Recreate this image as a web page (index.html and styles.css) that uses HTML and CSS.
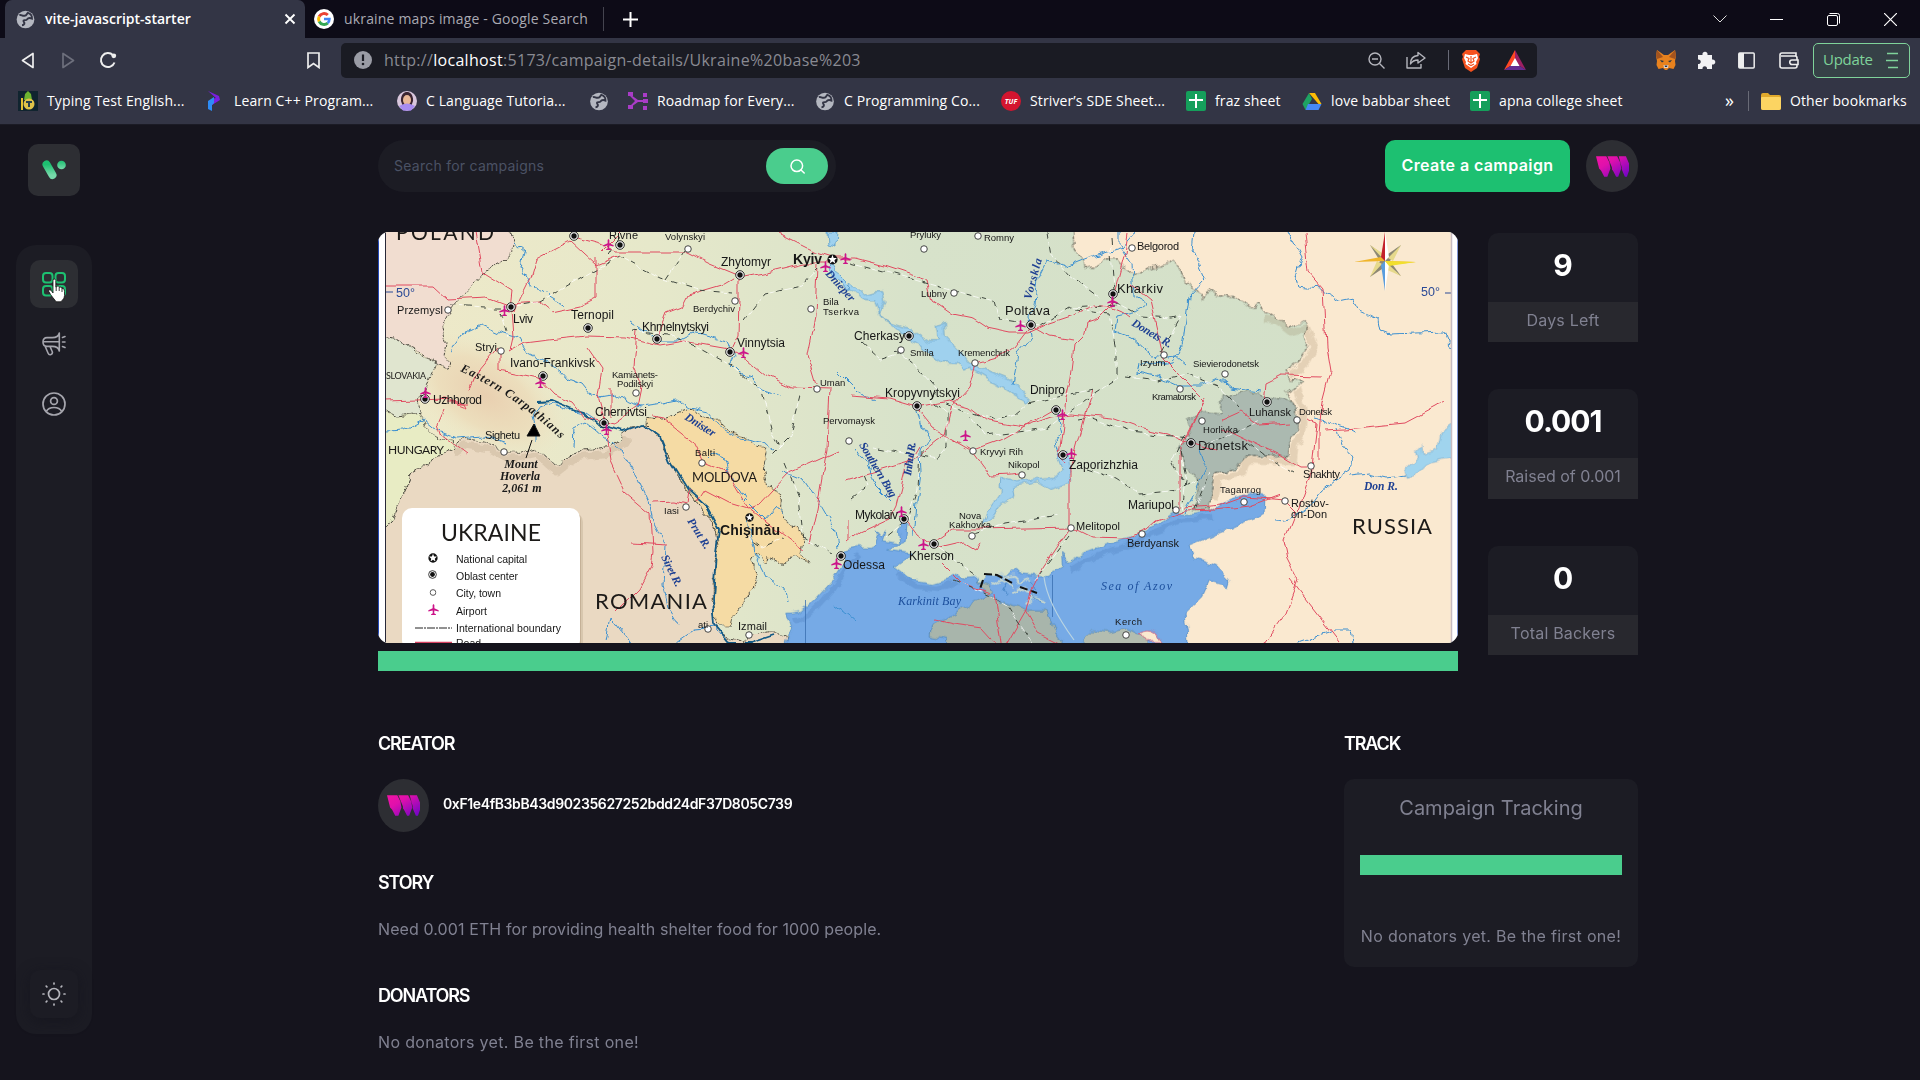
FILE: index.html
```html
<!DOCTYPE html>
<html lang="en">
<head>
<meta charset="utf-8">
<title>vite-javascript-starter</title>
<link rel="stylesheet" href="styles.css">
</head>
<body>
<svg class="defs" width="0" height="0" aria-hidden="true">
  <defs>
    <linearGradient id="tw" x1="0" y1="0" x2="1" y2="1"><stop offset="0" stop-color="#f213a4"/><stop offset=".35" stop-color="#e010ac"/><stop offset="1" stop-color="#6a04c8"/></linearGradient>
    <linearGradient id="lg" x1="0" y1="0" x2="0" y2="1"><stop offset="0" stop-color="#1dc071"/><stop offset="1" stop-color="#77d9aa"/></linearGradient>
    <linearGradient id="land" x1="0" y1="0" x2="1" y2="0"><stop offset="0" stop-color="#efe9c8"/><stop offset=".25" stop-color="#e6e8ca"/><stop offset=".5" stop-color="#d7e2ca"/><stop offset="1" stop-color="#d2dfc8"/></linearGradient>
    <radialGradient id="hills"><stop offset="0" stop-color="#e9cfb0"/><stop offset=".6" stop-color="#ecdbb9" stop-opacity=".8"/><stop offset="1" stop-color="#efe5c5" stop-opacity="0"/></radialGradient>
    <filter id="soft" x="-10%" y="-10%" width="120%" height="120%"><feDropShadow dx="8" dy="10" stdDeviation="10" flood-color="#54452c" flood-opacity=".45"/></filter>
    <filter id="rough" filterUnits="userSpaceOnUse" x="370" y="220" width="1100" height="440" color-interpolation-filters="sRGB"><feTurbulence type="fractalNoise" baseFrequency=".09" numOctaves="2" seed="4"/><feDisplacementMap in="SourceGraphic" scale="9" xChannelSelector="R" yChannelSelector="G"/></filter>
    <filter id="gentle" filterUnits="userSpaceOnUse" x="370" y="220" width="1100" height="440" color-interpolation-filters="sRGB"><feTurbulence type="fractalNoise" baseFrequency=".05" numOctaves="2" seed="9"/><feDisplacementMap in="SourceGraphic" scale="8" xChannelSelector="R" yChannelSelector="G"/></filter>
    <symbol id="globe" viewBox="0 0 20 20"><circle cx="10" cy="10" r="9.3" fill="#b4b7c0"/><path d="M3.500 5.500c2-1 3 1 5.500.5C11.500 6 11 4 12.500 3c3 1 4.500 3.500 4.300 6-2-1-4.300-.5-5.300 1s-2.500 0-3.500 1 1.500 2 .8 3.500-2 1.500-2.500 1.500" fill="none" stroke="#333545" stroke-width="2"/></symbol>
    <symbol id="sheet" viewBox="0 0 20 20"><rect width="20" height="20" rx="2" fill="#159f5b"/><path d="M9 3h2v5h6v2h-6v7H9v-7H3V8h6z" fill="#fff"/></symbol>
    <symbol id="third" viewBox="0 0 32 20"><path d="M0 0h10l3 6 1 6-3 8H8l-3-6-2-2zM11 0h9.500l3 6 1 6-3 8h-2l-3-6-1-1 0-2zM22 0h7l3 7v7l-2 6h-2l-3-7 0-2z" fill="url(#tw)"/></symbol>
    <symbol id="obl" viewBox="0 0 28 28"><circle cx="14" cy="14" r="12" fill="#fff" stroke="#111" stroke-width="2.500"/><circle cx="14" cy="14" r="7.500" fill="#111"/></symbol>
    <symbol id="cap" viewBox="0 0 28 28"><circle cx="14" cy="14" r="13" fill="#111"/><path d="M14 2l3 8h8l-6 6 2 8-7-5-7 5 2-8-6-6h8z" fill="#fff"/></symbol>
    <symbol id="town" viewBox="0 0 22 22"><circle cx="11" cy="11" r="9" fill="#fff" stroke="#333" stroke-width="2.500"/></symbol>
    <symbol id="air" viewBox="0 0 32 32"><path d="M16 0l2.500 3v9L31 18v4l-12.500-3-.5 8 5 3v2H9v-2l5-3-.5-8L1 22v-4l12.500-6V3z" fill="#cc1489"/></symbol>
  </defs>
</svg>

<header class="browser">
  <div class="tabs">
    <div class="tab active"><svg width="19" height="19"><use href="#globe"/></svg><span class="tab-a">vite-javascript-starter</span>
      <svg class="tab-x" width="12" height="12" viewBox="0 0 12 12"><path d="M1.500 1.500l9 9m0-9l-9 9" stroke="#fff" stroke-width="1.900"/></svg></div>
    <div class="tab second"><svg width="20" height="20" viewBox="0 0 20 20" fill="none" stroke-width="3"><circle cx="10" cy="10" r="10" fill="#fff"/><path d="M5.200 7.500A5.500 5.500 0 0 1 13.800 6" stroke="#ea4335"/><path d="M5.200 7.500a5.500 5.500 0 0 0 0 5" stroke="#fbbc05"/><path d="M5.200 12.500a5.500 5.500 0 0 0 8.500 1.600" stroke="#34a853"/><path d="M10 10h5.400c0 1.700-.7 3.200-1.700 4.100" stroke="#4285f4" stroke-width="2.600"/></svg><span class="tab-b">ukraine maps image - Google Search</span></div>
    <svg class="plus" width="15" height="15" viewBox="0 0 15 15"><path d="M7.500 0v15M0 7.500h15" stroke="#fff" stroke-width="2"/></svg>
    <div class="win">
      <svg width="14" height="8" viewBox="0 0 14 8" fill="none" stroke="#ddd"><path d="M.5.5L7 7 13.500.5"/></svg>
      <svg width="13" height="13" viewBox="0 0 13 13"><path d="M0 6.500h13" stroke="#fff"/></svg>
      <svg width="13" height="13" viewBox="0 0 13 13" fill="none" stroke="#fff"><rect x=".5" y="2.500" width="10" height="10" rx="1.500"/><path d="M2.500.5h8a2 2 0 0 1 2 2v8"/></svg>
      <svg width="13" height="13" viewBox="0 0 13 13"><path d="M0 0l13 13M13 0L0 13" stroke="#fff" stroke-width="1.200"/></svg>
    </div>
  </div>
  <div class="toolbar">
    <span class="cell"><svg width="14" height="17" viewBox="0 0 14 17" fill="none" stroke="#eee" stroke-width="1.700" stroke-linejoin="round"><path d="M12 1.500v14L1.500 8.500z"/></svg></span>
    <span class="cell"><svg width="14" height="17" viewBox="0 0 14 17" fill="none" stroke="#6d6f7c" stroke-width="1.700" stroke-linejoin="round"><path d="M2 1.500v14l10.500-7z"/></svg></span>
    <span class="cell"><svg width="18" height="18" viewBox="0 0 18 18" fill="none" stroke="#eee" stroke-width="2"><path d="M15.500 11.500A7 7 0 1 1 14 4.200"/><circle cx="14.800" cy="4.800" r="2.400" fill="#eee" stroke="none"/></svg></span>
    <span class="cell mark"><svg width="13" height="17" viewBox="0 0 13 17" fill="none" stroke="#eee" stroke-width="1.700"><path d="M1 1h11v14.500L6.500 11.500 1 15.500z"/></svg></span>
    <div class="url">
      <svg width="18" height="18" viewBox="0 0 18 18"><circle cx="9" cy="9" r="9" fill="#9a9ca5"/><path d="M9 3.500V10" stroke="#1b1c24" stroke-width="2.200"/><circle cx="9" cy="13" r="1.300" fill="#1b1c24"/></svg>
      <span class="addr">http://<b>localhost</b>:5173/campaign-details/Ukraine%20base%203</span>
      <span class="cell"><svg width="17" height="17" viewBox="0 0 17 17" fill="none" stroke="#b5b6bd" stroke-width="1.400"><circle cx="7" cy="7" r="6"/><path d="M11.500 11.500l5 5M4 7h6"/></svg></span>
      <span class="cell share"><svg width="20" height="18" viewBox="0 0 20 18" fill="none" stroke="#b5b6bd" stroke-width="1.400"><path d="M1 6v11h14v-4M12 1.500l7 5.500-7 5V9c-4 0-6 1.500-7.500 4C4.500 8 7 4.800 12 4.500z" stroke-linejoin="round"/></svg></span>
      <i class="bar"></i>
      <span class="cell wide"><svg width="20" height="23" viewBox="0 0 20 23"><path d="M5 1h10l4 4-1 3 1 2-3 9-6 4-6-4-3-9 1-2-1-3z" fill="#f5521e"/><path d="M4 5l4 1h4l4-1 1 4-2 4 .5 2L10 19l-5.500-4L5 13 3 9z" fill="#fff"/><path d="M5 8l3 1.500L7 12l3 2 3-2-1-2.500L15 8M10 7v7M7 15l3 1.500L13 15" fill="none" stroke="#f5521e" stroke-width="1.200"/></svg></span>
      <span class="cell wide"><svg width="22" height="20" viewBox="0 0 22 20"><path d="M11 0L0 20l11-7z" fill="#ff4724"/><path d="M11 0l11 20-11-7z" fill="#9e1f63"/><path d="M0 20h22l-11-7z" fill="#662d91"/><path d="M11 8l4.500 8h-9z" fill="#fff"/></svg></span>
    </div>
    <span class="cell fox"><svg width="20" height="20" viewBox="0 0 20 20"><path d="M1 0l7 5h4l7-5 1 6-1 5 .5 4-2 4-4.500-1-2 2H9l-2-2-4.500 1-2-4L1 11 0 6z" fill="#e8821e"/><path d="M1 0l6 7-6 2-1-3zM19 0l-6 7 6 2 1-3z" fill="#a3541f"/><path d="M7.500 15h5l-.5 3H8z" fill="#e6d3c8"/><path d="M8.500 15.500h3L11 17H9z" fill="#233447"/><path d="M4 10l4 1-2 1.500zM16 10l-4 1 2 1.500z" fill="#233447"/></svg></span>
    <span class="cell"><svg width="20" height="20" viewBox="0 0 20 20"><path d="M2 5h4.500a2.600 2.600 0 1 1 5 0H16v4.500a2.600 2.600 0 1 1 0 5V19h-5a2.300 2.300 0 1 0-4.500 0H2v-5a2.300 2.300 0 1 0 0-4.500z" fill="#f2f2f4"/></svg></span>
    <span class="cell"><svg width="17" height="17" viewBox="0 0 17 17"><rect x=".8" y="1" width="15.400" height="15" rx="1" fill="none" stroke="#eee" stroke-width="1.500"/><path d="M1 1h5v15H1z" fill="#eee"/></svg></span>
    <span class="cell wallet"><svg width="20" height="17" viewBox="0 0 20 17" fill="none" stroke="#eee" stroke-width="1.600"><path d="M17 4V1H3a2 2 0 0 0-2 2v11a2 2 0 0 0 2 2h13a2 2 0 0 0 2-2V6a2 2 0 0 0-2-2H2"/><path d="M19 8h-6a2 2 0 0 0 0 4.500h6z" fill="#333545"/></svg></span>
    <span class="update"><span>Update</span><svg width="12" height="17" viewBox="0 0 12 17"><path d="M1 1.500h11M0 8.500h12M2 15.500h10" stroke="#7fd39a" stroke-width="1.700"/></svg></span>
  </div>
  <div class="marks">
    <span class="bm"><svg width="20" height="20" viewBox="0 0 20 20"><rect width="20" height="20" fill="#10242f"/><path d="M6 9l1-6 3-3 3 3 1 6z" fill="#6db52f"/><path d="M3 7h2v12H3z" fill="#e3c232"/><circle cx="11" cy="13" r="5.500" fill="#e0c44a"/><path d="M8 11h6M11 11v5" stroke="#29424e" stroke-width="2"/></svg><b>Typing Test English...</b></span>
    <span class="bm"><svg width="18" height="20" viewBox="0 0 18 20"><path d="M2 0l11 5 1 4-8 5V8l4-1z" fill="#7a1fe0"/><path d="M2 10l6-4v6l-2 2v6l-4-2z" fill="#2d8cf5"/></svg><b>Learn C++ Program...</b></span>
    <span class="bm"><svg width="20" height="20" viewBox="0 0 20 20"><circle cx="10" cy="10" r="10" fill="#d8c6dc"/><path d="M4 16h12l-2 3.200H6z" fill="#8650e0"/><path d="M4 10c-1-12 13-12 12 0l-2 6H6z" fill="#3a2430"/><ellipse cx="10" cy="9" rx="4" ry="5" fill="#e8b796"/><path d="M2 15q8-5 16 0l-4 4.500H6z" fill="#a78cf0"/></svg><b>C Language Tutoria...</b></span>
    <span class="bm"><svg width="19" height="19"><use href="#globe"/></svg></span>
    <span class="bm"><svg width="20" height="18" viewBox="0 0 20 18" fill="#a93cc7"><path d="M0 0h5v4H0zM0 13h5v4H0zM15 1h4v4h-4zM15 7h5v4h-5zM15 14h4v4h-4z"/><path d="M3 3l7 5h6v2h-6l-7 5-1-1 5-5-5-5z"/></svg><b>Roadmap for Every...</b></span>
    <span class="bm"><svg width="19" height="19"><use href="#globe"/></svg><b>C Programming Co...</b></span>
    <span class="bm"><svg width="20" height="20" viewBox="0 0 20 20"><circle cx="10" cy="10" r="10" fill="#d3152f"/><text x="10" y="13" text-anchor="middle" class="tuf">TUF</text></svg><b>Striver’s SDE Sheet...</b></span>
    <span class="bm"><svg width="20" height="20"><use href="#sheet"/></svg><b>fraz sheet</b></span>
    <span class="bm"><svg width="19" height="17" viewBox="0 0 19 17"><path d="M6.500 0h6L19 11l-3 0z" fill="#fbbc05"/><path d="M6.500 0L0 11l3 6 6.500-11z" fill="#1ea362"/><path d="M5.500 11H19l-3 6H3z" fill="#4688f4"/></svg><b>love babbar sheet</b></span>
    <span class="bm"><svg width="20" height="20"><use href="#sheet"/></svg><b>apna college sheet</b></span>
    <span class="bm more">»</span>
    <i class="bar"></i>
    <span class="bm"><svg width="20" height="17" viewBox="0 0 20 17"><path d="M0 2q0-2 2-2h5l2 2h9q2 0 2 2v11q0 2-2 2H2q-2 0-2-2z" fill="#e0a92c"/><path d="M0 5q0-1 1-1h17q2 0 2 1v10q0 2-2 2H2q-2 0-2-2z" fill="#fcd462"/></svg><b class="other">Other bookmarks</b></span>
  </div>
</header>

<div class="app">
  <aside class="rail">
    <div class="logo"><svg width="24" height="20" viewBox="0 0 24 20"><path d="M4.500 4.500l6 10.500" stroke="url(#lg)" stroke-width="8" stroke-linecap="round"/><circle cx="19.500" cy="5" r="4.300" fill="url(#lg)"/></svg></div>
    <nav class="nav">
      <a class="item on"><svg width="24" height="25" viewBox="0 0 24 25" fill="none" stroke="#1dc071" stroke-width="2"><rect x="1" y="1" width="9.500" height="9.500" rx="3"/><rect x="13.500" y="1" width="9.500" height="9.500" rx="3"/><rect x="1" y="14" width="9.500" height="9.500" rx="3"/><rect x="13.500" y="14" width="9.500" height="9.500" rx="3"/></svg>
        <svg class="hand" width="18" height="25" viewBox="0 0 18 25"><path d="M5 1.500q2-1.500 2.800.8V9h.7q.3-1.500 1.800-1 1 .3 1 1.500.5-.8 1.700-.3 1 .4.9 1.500.8-.6 1.700.1.900.7.900 2.700v4q0 3-2 4.500-1 1-1.500 1.800H8q-1-1.800-3-4-2.500-3-4.300-6.500-.4-1.800 1.200-1.600 1.500.3 3.100 3.300z" fill="#fff" stroke="#111" stroke-width=".8"/><path d="M8.200 9v4M11.200 9.500V13M14 11v3" stroke="#222" stroke-width=".9"/></svg></a>
      <a class="item"><svg width="24" height="24" viewBox="0 0 24 24" fill="none" stroke="#a5a5ad" stroke-width="1.600" stroke-linecap="round" stroke-linejoin="round"><path d="M17.300 1v18M17.300 1q-1 4.600-7 4.600H5Q1 5.600 1 10t4 4.400h5.300q6 0 7 4.600M1.500 9.700H17M3 14l3 7q1 2.300 3 1.500t1.200-3L8 14.500M20.500 10H23M20.500 5.500L23 4.500M20.500 14.500l2.500 1"/></svg></a>
      <a class="item"><svg width="24" height="24" viewBox="0 0 24 24" fill="none" stroke="#a5a5ad" stroke-width="1.700"><circle cx="12" cy="12" r="11"/><circle cx="12" cy="9" r="3.400"/><path d="M4.300 19.500q2-4 7.700-4t7.700 4"/></svg></a>
      <a class="item sun"><svg width="24" height="24" viewBox="0 0 24 24" fill="none" stroke="#b4b4bb" stroke-width="1.700" stroke-linecap="round"><circle cx="12" cy="12" r="5.500"/><path d="M12 1v1M12 22v1M1 12h1M22 12h1M4.200 4.200l.7.7M19.100 19.100l.7.7M4.200 19.800l.7-.7M19.100 4.900l.7-.7"/></svg></a>
    </nav>
  </aside>

  <main class="main">
    <div class="top">
      <div class="search"><span>Search for campaigns</span><button class="go"><svg width="15" height="15" viewBox="0 0 15 15" fill="none" stroke="#fff" stroke-width="1.500" stroke-linecap="round"><circle cx="6.800" cy="6.800" r="5.800"/><path d="M11 11l3.200 3"/></svg></button></div>
      <button class="create">Create a campaign</button>
      <div class="ava"><svg width="33" height="21"><use href="#third"/></svg></div>
    </div>

    <div class="hero">
      <div class="visual">
        <svg class="map" viewBox="378 232 1080 411" width="1080" height="411">
          <rect x="378" y="232" width="1080" height="411" fill="#fff"/>
          <svg x="385" y="232" width="1067" height="411" viewBox="385 232 1067 411">
          <rect x="385" y="232" width="1067" height="411" fill="url(#land)"/>
          <ellipse cx="485" cy="395" rx="90" ry="50" fill="url(#hills)" transform="rotate(32 485 395)"/>
          <g filter="url(#rough)">
          <!-- western neighbours -->
          <g transform="translate(370 390) scale(.33333)" stroke="#4c4a40" stroke-width="3" stroke-dasharray="10 3 3 3" stroke-linejoin="round">
            <path d="M20-500H410L432-440 428-415 400-385 350-360 300-305 245-250 215-190 228-145 222-100 245-85 240-62 200-80 110-140 20-165z" fill="#f1ddd0"/>
            <path d="M20-165L75-150 110-140 150-105 200-80 180-35 162 0 145 30 150 70 75 78 20 40z" fill="#e0e5cf"/>
            <path d="M20 40L75 78 150 70 165 110 200 145 250 150 250 172 180 215 120 255 95 320 70 385 20 440z" fill="#e8ecc4"/>
            <path d="M20 800V440L70 385 95 320 120 255 180 215 250 172 280 145 350 155 400 185 450 187 500 175 535 205 560 225 580 215 610 185 715 170 755 150 757 120 830 105 870 145 900 215 945 290 980 340 1030 400 1045 470 1030 560 1030 640 1042 705 1062 742 1120 758 1150 735 1200 724 1250 738 1262 800z" fill="#ead9c2"/>
            <path d="M828 102L830 82 870 88 900 80 930 68 960 58 1000 78 1045 85 1060 110 1095 130 1130 142 1160 172 1190 175 1180 235 1190 290 1238 310 1235 350 1245 395 1298 430 1290 490 1320 520 1270 500 1240 520 1190 500 1185 520 1160 490 1148 510 1160 560 1150 600 1115 640 1085 680 1080 705 1040 705 1030 640 1030 560 1045 470 1030 400 980 340 945 290 900 215 870 145z" fill="#f5dba4"/>
            <path d="M250 190L285 165 350 175 400 203 450 205 500 195 560 245 615 203 720 188 765 160 770 140" fill="none" stroke="#8a7350" stroke-width="22" stroke-dasharray="none" opacity=".16"/>
          </g>
          <!-- eastern neighbours and seas -->
          <g transform="translate(850 220) scale(.33333)" stroke-linejoin="round">
            <path d="M670 10L675 80 690 110 705 140 740 138 760 120 800 120 830 150 850 165 885 145 940 138 965 120 990 145 1010 190 1050 225 1060 242 1085 205 1110 225 1130 225 1170 240 1200 262 1215 265 1225 250 1238 278 1275 285 1320 325 1360 308 1372 322 1358 350 1375 382 1360 412 1330 438 1305 455 1320 478 1358 482 1345 495 1310 515 1330 545 1335 560 1345 600 1345 630 1320 660 1315 710 1260 708 1190 705 1160 745 1095 755 1080 865 985 1000 985 1300 1840 1300V0z" fill="#fae9d0" stroke="#4c4a40" stroke-width="3" stroke-dasharray="10 3 3 3"/>
            <path d="M1240 296L1275 300 1325 340 1368 325 1378 350 1392 385 1375 420 1345 448 1320 465M1340 505L1355 560 1362 610 1358 640 1335 675 1330 725 1190 720 1175 760 1108 772 1095 840" fill="none" stroke="#8a7350" stroke-width="20" opacity=".2"/>
            <path d="M1115 535L1150 522 1200 515 1250 530 1330 545 1335 560 1345 600 1345 630 1320 660 1315 710 1260 708 1190 705 1160 745 1095 755 1080 865 1030 870 1050 780 1000 740 985 680 1020 645 1010 600 1050 580 1115 580z" fill="#abb9b0" stroke="#3e443e" stroke-width="2" stroke-dasharray="10 3 3 3"/>
            <g transform="translate(0 690)">
              <path d="M-15 300L20 290 60 292 75 285 85 255 78 240 95 260 108 238 100 275 150 285 145 245 155 210 170 212 162 280 110 300 190 312 135 350 165 372 190 390 250 400 300 385 320 372 345 385 380 382 385 400 410 370 470 380 490 360 520 375 560 380 590 380 640 350 638 310 655 340 700 310 780 280 850 262 890 235 940 215 975 190 1030 190 1085 180 1130 150 1200 130 1245 140 1242 190 1170 220 1130 240 1080 260 1020 285 1035 325 1062 335 1100 350 1140 392 1135 410 1075 395 1055 440 1030 465 1005 490 1012 540 1015 610H-200L-175 530-190 490-150 485-110 455-60 400-20 340z" fill="#76aae6" stroke="#3f82c4" stroke-width="2"/>
              <path d="M-165 515L-140 505-100 470-50 415-10 350 25 315M140 370L200 408 260 415 330 395M655 362L710 330 790 298 860 280 900 252 950 232 990 210 1090 200" fill="none" stroke="#3c6cae" stroke-width="16" opacity=".22"/>
              <path d="M380 395L415 435 450 455 540 480 590 480 620 550 660 610H310L290 568 240 558 245 530 320 490 380 450 430 428 420 405z" fill="#a8b5ab" stroke="#4580b5" stroke-width="2"/>
              <path d="M670 600L730 540 780 548 830 535 860 550 900 560 900 600z" fill="#b3bdb0" stroke="#4580b5" stroke-width="2"/>
              <path d="M870 550q20-15 45 0l15 25h-40z" fill="#fae9d0" stroke="#d4416a" stroke-width="2"/>
              <path d="M430 375l25-10 10 20 25-5 20 20 30-15M430 405l25-15 40 20M490 430l20-15 30 20M530 460l20-20 30 15" fill="none" stroke="#c5d6d0" stroke-width="6"/>
              <path d="M540 390l20 25-15 20 25 20M470 400l-15 25 20 10" fill="none" stroke="#3f82c4" stroke-width="3"/>
              <path d="M452 82L500 95 560 88 610 85 640 60 625 20 650 0 660 100 600 118 560 95 490 110 495 135 450 165 425 205 400 220 415 180 450 130z" fill="#a0d0ed" stroke="#5b9bd0" stroke-width="2"/>
            </g>
            <path d="M0 185L40 225 75 215 95 215 102 250 85 278 105 300 180 325 240 365 268 365 262 310 280 305 282 350 330 400 355 430 475 478 500 495 540 540 530 550 450 500 360 445 340 450 320 430 270 428 230 395 190 370 130 315 95 290 75 240 35 238 0 205z" fill="#9fd1ee" stroke="#4b93c9" stroke-width="2"/>
            <path d="M-22 110L5 112 2 165-5 180-25 150z" fill="#9fd1ee" stroke="none" opacity="0"/>
            <path d="M1665 750L1705 710 1700 690 1715 675 1720 705 1765 690 1775 640 1820 610V710L1740 725 1700 765 1672 775z" fill="#a0d4ee" stroke="#6ba6cf" stroke-width="2"/>
          </g>
          <path d="M827 232h10l-1 14-8-2zM832 262l8 14 12 12-4 2-14-12-6-12z" fill="#9fd1ee" stroke="#4b93c9" stroke-width=".7"/>
          <!-- rivers -->
          <g fill="none" stroke="#3b8fd0" stroke-width="1" stroke-linejoin="round">
            <path d="M513 242l11 9-3 17 8 15 14 10 20 12M450 352l12-18 20-9 18 8 20 6 8 14 20 10 12 8 8 9 14 5 8 10 10 2M630 322l16 10 10 8 22 0 16-8 18 5 16 4 8 14-5 10 9 9 12 4 10 12 18 6M588 392l10 5 18-3 12 8 14 4 15-2 20-4 12 8 20 4 12 16 20 10 22 4 12 8M386 431l20-1 18-10 12 10 20 8 28-2 22 7M537 443v-12l-4-14 7-10 14-4 18 8 14 2 18 12M573 447l1-18 12-6 20 16 17 12 13 22 14 31 3 18 12 24-2 40 6 24 8 14M748 520l8 36 10 20 20 14 2 12M700 465l12-12 14 6 6 20 12 20 20 20 12-14 8 10M780 470l24 10 16 24 14 24 4 20M855 620l-20-14M606 642l4-26 8 10 14 20M676 643l20-14 20-2 10 14"/>
            <path d="M1136 232l-14 16-36 11-20 8-20-5-8 16-3 26-6 14 2 20-13 15-5 32M1120 232l0 14 12 18 2 32 14 8-12 8-18 4-2 16 16 6 24 20 20-2 10 8M1195 232l-2 20 12 28-16 17-6 44-10 22-14 2-20-3-2 10 20 4 22 10 24 0 16-8 12 10 30 4M1288 232l14 25-6 20 2 10 22 2 18 12 14-3 8 14 18 8 2 10 10 4 54-2 6 14 12 4M1314 418l12 3 14 6 16 5M1338 430l4 14 10 12-2 14-16 10-14 12-10 14-20 12-14 2M1350 476l20-2 16 4 20-3M917 410l4 16 9 12-10 14 1 20-4 30-3 34M854 448l14 18 6 18 20 20M1058 412l5 20-8 10 4 16M836 370l20 20 20 10M1200 450l6 18-14 30-8 14M1296 643l40-14 14 0 2 14"/>
          </g>
          </g>
          <path d="M537 402l14-1 20 8 14 4 14 12 24 6 20-7 17 13 10 24 18 29 19 17 12 22-3 22-3 50 2 24 15 18 20 0 24-8" fill="none" stroke="#145b86" stroke-width="1.800" filter="url(#gentle)"/>
          <path d="M984 574L997 575 1014 584M1020 587l17 6M983 580l-3 9" fill="none" stroke="#111" stroke-width="2" stroke-dasharray="8 3"/>
          <path d="M1052.500 575v42M805.500 600v43" stroke="#3a6eb0" stroke-width=".8"/>
          <path d="M1044 577q3 26 30 63" fill="none" stroke="#b9d4e2" stroke-width="1.200"/>
          <!-- roads -->
          <g fill="none" stroke="#e04a60" stroke-width="1" stroke-linejoin="round" filter="url(#gentle)">
            <path d="M385 286l48 0 14 13 40-2 24 9M475 232l7 40 29 18-2 18 6 4 5-13 10-20 6-20 34-18 26 24 24-10M574 237l30 8 12 6 70 0 24 12 34 14 20-4 40-10h28M511 308l2 30-3 14 15-9 24-3 37-4 40 1 34 8 24-4 46 8 12 6 24 20 26 12 38 1M500 350v20l20 4 18 4 16 17 20 8 12 15 28 6 24-17 4-20-9-20 3-36M739 275v24l-1 36-8 17M656 339l10-26 16-6 6-12 34-10 17-10M610 388v28M588 348l14 20-4 28 7 25M596 258v40l-16 8-28 6-12-10-30 2M440 399l24 4 2 4-20-8-60 2M444 410l-6 14 4 12 24 18M448 403l20 0M470 390l8-20 20-24M606 428l5 34 14 30 26 22 2 38-2 14-12 22-24 24M654 502l20-1 13 3 2-14M668 545l-36-2M696 502l8-12 25 13 20 6 10-4 30-32 49-22M653 416l10 2 30 24 10 20 24 10 22 36 54 42M830 388l-3 60-10 60-8 34M817 265l-2 50-8 40 9 30M622 232l-20 20M775 232l40 20 20 6 20 0 30 8 42 14 5 20 20 14 20 4 15 10 24 5 17 0 22-10 24-8 20-9 14 0 14 6 8 6M1128 232l-3 20-11 42 0 9-16 16-12 4-3 14-8 8-4 32-5 22-3 26-4 30 6 8M1031 326l17 10 26 4M1031 326l-8 10-9 12-8 6-31 9-7 25-17 19-6 26-20 16-13 12-20 6-48 14M850 396l40 3 27 8 32-6 20 6 18 14 36 6 28-10 20-3 40 4 28 10 28 6 18 8 32 10M917 407l16 20 40 23 28-10 52-30M936 620l17 4 30 4 18 20M973 452l18 24 20-1 14-2M848 542l12-10 30-14 6-12 10-40 12-20M904 518l13 17 18 14 30-7 10 6 4-6M850 520l0 20M933 543l20-14 26 0 92-2 20 10 36 1 20-8 10-9 28-10 30-1 35-4 30-11M1069 528l0-63 3-4 20-72M1069 528l-28 42-10 20-5 20-20 35M1180 508l0-60 4-4 20-44-40-40-14-60-20-16M1222 421l20-9 18 13 30-2M1181 447l25-50M1223 428l54 26 24 14 6 0M1307 420l10 4-6 52-12 34M1264 403l2-20 16-8 40 1M1305 232l4 40 14 16 3 60 4 24-8 30-3 30 0 28M1325 430l20-1 20-2 40-4 30-16 10-6M1184 508l38-3 22-8 42 3 10 10-12 30 4 20 10 20-12 32-22 31M1291 580l48 62M994 594l8 56M942 563l20 20 28 10M1025 610l14 24 20 10"/>
          </g>
          <!-- oblast limits -->
          <g fill="none" stroke="#3f473f" stroke-width="1" stroke-dasharray="6 9" filter="url(#gentle)">
            <path id="lim" d="M450 305l35 2 25 0 30-5 50-30 30-16 40 22 38 12 35 3M686 249l-20 30M500 312l8 26M620 237l-12 20M745 320l20-26 36-8 16-17M632 330l34 4 30 12 36 20 30 26 10 40 8 14M800 395l-10 40-20 20M850 262l30 8 70 20 45 12 5 18 40 6 30-18 50-3M1048 232l4 24 18 20 30 22M1110 240l4 50M1115 302l26 14 32 2 8-2-20 36M1075 310l34 4 8 40 0 24-30 20-38 30-64 8-14-20M945 404l50 16 20-6 12-10 66-15M895 351l28 22 14 16-6 12 16 12 0 34-10 12-66-12M860 342l20 18 18-6M1078 420l12-2 40 14 60 6M1127 377l30 4 30-7 32 12 20 22M1086 468l30 10 24 16 40-4 18-10M975 534l30-10 54-9M933 545l45 32M1069 535l-36 48M955 580l28 12 24 14 26 40M1180 452l6 30-4 30M1195 510l16-38M920 450l-2 40-10 30-22 18M850 500l20-16-4-10M785 463l14 34 4 40 30 16M742 532l20 14 20-8M1185 435l-12 26 10 20M1205 445l14-6 40-20M1250 444l18 14 24 14"/>
            <use href="#lim" stroke="#fff" stroke-dashoffset="7.500" opacity=".75"/>
          </g>
          <g>
            <use href="#cap" x="827" y="254" width="11" height="11"/><use href="#cap" x="745" y="513" width="9" height="9"/>
            <use href="#obl" x="569" y="231" width="10" height="10"/><use href="#obl" x="615" y="240" width="10" height="10"/><use href="#obl" x="735" y="270" width="10" height="10"/><use href="#obl" x="506" y="302" width="10" height="10"/><use href="#obl" x="583" y="323" width="10" height="10"/><use href="#obl" x="652" y="334" width="10" height="10"/><use href="#obl" x="725" y="347" width="10" height="10"/><use href="#obl" x="538" y="371" width="10" height="10"/><use href="#obl" x="420" y="394" width="10" height="10"/><use href="#obl" x="599" y="418" width="10" height="10"/><use href="#obl" x="836" y="551" width="10" height="10"/><use href="#obl" x="904" y="331" width="10" height="10"/><use href="#obl" x="912" y="401" width="10" height="10"/><use href="#obl" x="1026" y="320" width="10" height="10"/><use href="#obl" x="1108" y="289" width="10" height="10"/><use href="#obl" x="1051" y="405" width="10" height="10"/><use href="#obl" x="1058" y="450" width="10" height="10"/><use href="#obl" x="899" y="514" width="10" height="10"/><use href="#obl" x="929" y="539" width="10" height="10"/><use href="#obl" x="1186" y="438" width="10" height="10"/><use href="#obl" x="1262" y="397" width="10" height="10"/>
            <use href="#town" x="684" y="245" width="8" height="8"/><use href="#town" x="731" y="297" width="8" height="8"/><use href="#town" x="807" y="305" width="8" height="8"/><use href="#town" x="444" y="306" width="8" height="8"/><use href="#town" x="497" y="347" width="8" height="8"/><use href="#town" x="632" y="389" width="8" height="8"/><use href="#town" x="813" y="385" width="8" height="8"/><use href="#town" x="500" y="448" width="8" height="8"/><use href="#town" x="698" y="459" width="8" height="8"/><use href="#town" x="682" y="503" width="8" height="8"/><use href="#town" x="704" y="625" width="8" height="8"/><use href="#town" x="745" y="631" width="8" height="8"/><use href="#town" x="845" y="437" width="8" height="8"/><use href="#town" x="920" y="245" width="8" height="8"/><use href="#town" x="974" y="232" width="8" height="8"/><use href="#town" x="950" y="289" width="8" height="8"/><use href="#town" x="897" y="346" width="8" height="8"/><use href="#town" x="971" y="359" width="8" height="8"/><use href="#town" x="1128" y="244" width="8" height="8"/><use href="#town" x="1160" y="351" width="8" height="8"/><use href="#town" x="1221" y="370" width="8" height="8"/><use href="#town" x="1176" y="385" width="8" height="8"/><use href="#town" x="1198" y="417" width="8" height="8"/><use href="#town" x="969" y="447" width="8" height="8"/><use href="#town" x="1018" y="471" width="8" height="8"/><use href="#town" x="968" y="532" width="8" height="8"/><use href="#town" x="1067" y="524" width="8" height="8"/><use href="#town" x="1138" y="530" width="8" height="8"/><use href="#town" x="1172" y="506" width="8" height="8"/><use href="#town" x="1240" y="498" width="8" height="8"/><use href="#town" x="1281" y="497" width="8" height="8"/><use href="#town" x="1307" y="462" width="8" height="8"/><use href="#town" x="1293" y="416" width="8" height="8"/><use href="#town" x="1122" y="631" width="8" height="8"/>
            <use href="#air" x="603" y="239" width="11" height="11"/><use href="#air" x="820" y="261" width="11" height="11"/><use href="#air" x="840" y="253" width="11" height="11"/><use href="#air" x="499" y="305" width="11" height="11"/><use href="#air" x="738" y="347" width="11" height="11"/><use href="#air" x="535" y="377" width="11" height="11"/><use href="#air" x="420" y="387" width="11" height="11"/><use href="#air" x="601" y="424" width="11" height="11"/><use href="#air" x="831" y="558" width="11" height="11"/><use href="#air" x="1015" y="320" width="11" height="11"/><use href="#air" x="1107" y="296" width="11" height="11"/><use href="#air" x="1057" y="409" width="11" height="11"/><use href="#air" x="960" y="430" width="11" height="11"/><use href="#air" x="1066" y="448" width="11" height="11"/><use href="#air" x="896" y="506" width="11" height="11"/><use href="#air" x="918" y="539" width="11" height="11"/>
            <path d="M534 424l6 12h-13zM532 440l-6 18" stroke="#111"/>
          </g>
          <g class="ct">
            <text x="793" y="264" class="kyiv" textLength="29">Kyiv</text><text x="721" y="266" textLength="50">Zhytomyr</text><text x="513" y="323" textLength="20">Lviv</text><text x="571" y="318.500" textLength="43">Ternopil</text><text x="642" y="331" textLength="67">Khmelnytskyi</text><text x="737" y="346.500" textLength="48">Vinnytsia</text><text x="510" y="367" textLength="85">Ivano-Frankivsk</text><text x="433" y="404" textLength="49">Uzhhorod</text><text x="595" y="416" textLength="52">Chernivtsi</text><text x="1117" y="292.500" textLength="46" class="big">Kharkiv</text><text x="1005" y="314.500" textLength="45" class="big">Poltava</text><text x="854" y="340" textLength="51">Cherkasy</text><text x="885" y="396.500" textLength="75">Kropyvnytskyi</text><text x="1030" y="394" textLength="35">Dnipro</text><text x="1198" y="450" textLength="50" class="big">Donetsk</text><text x="1069" y="469" textLength="69">Zaporizhzhia</text><text x="855" y="519" textLength="43">Mykolaiv</text><text x="909" y="560" textLength="45">Kherson</text><text x="843" y="569" textLength="42">Odessa</text><text x="1128" y="509" textLength="46">Mariupol</text><text x="720" y="535" class="chis" textLength="60">Chişinău</text>
          </g>
          <g class="sm">
            <text x="609" y="239" textLength="29" class="md">Rivne</text><text x="665" y="240" textLength="40">Volynskyi</text><text x="397" y="314" textLength="46" class="md">Przemysl</text><text x="475" y="351" textLength="22" class="md">Stryi</text><text x="693" y="311.500" textLength="42">Berdychiv</text><text x="823" y="305">Bila</text><text x="823" y="315" textLength="36">Tserkva</text><text x="612" y="378" textLength="46">Kamianets-</text><text x="617" y="387" textLength="36">Podilskyi</text><text x="820" y="386">Uman</text><text x="485" y="439" textLength="35" class="md">Sighetu</text><text x="695" y="456" textLength="20">Balti</text><text x="664" y="514">Iasi</text><text x="823" y="424" textLength="52">Pervomaysk</text><text x="698" y="628">ati</text><text x="738" y="630" textLength="29" class="md">Izmail</text>
            <text x="910" y="238" textLength="31">Pryluky</text><text x="984" y="241" textLength="30">Romny</text><text x="1137" y="250" textLength="42" class="md">Belgorod</text><text x="921" y="297">Lubny</text><text x="910" y="356">Smila</text><text x="958" y="356" textLength="52">Kremenchuk</text><text x="1140" y="365.500">Izyum</text><text x="1193" y="367" textLength="66">Sievierodonetsk</text><text x="1152" y="399.500" textLength="44">Kramatorsk</text><text x="1203" y="433" textLength="35">Horlivka</text><text x="1249" y="416" textLength="42" class="md">Luhansk</text><text x="1299" y="414.500" textLength="33">Donetsk</text><text x="980" y="455" textLength="43">Kryvyi Rih</text><text x="1008" y="468">Nikopol</text><text x="959" y="519">Nova</text><text x="949" y="528" textLength="42">Kakhovka</text><text x="1076" y="530" textLength="44" class="md">Melitopol</text><text x="1127" y="547" textLength="52" class="md">Berdyansk</text><text x="1220" y="493" textLength="41">Taganrog</text><text x="1303" y="477.500" textLength="37" class="md">Shakhty</text><text x="1291" y="507" class="md">Rostov-</text><text x="1291" y="518" class="md">on-Don</text><text x="1115" y="625" textLength="27">Kerch</text>
          </g>
          <g class="nation"><text x="396" y="240" textLength="98" class="n20">POLAND</text><text x="386" y="379" textLength="40" class="n9">SLOVAKIA</text><text x="388" y="454" textLength="56" class="n12">HUNGARY</text><text x="692" y="482" textLength="65" class="n13">MOLDOVA</text><text x="595" y="609" textLength="112" class="n22">ROMANIA</text><text x="1352" y="534" textLength="80" class="n22">RUSSIA</text></g>
          <g class="peak"><text x="521" y="468" text-anchor="middle">Mount</text><text x="520" y="480" text-anchor="middle">Hoverla</text><text x="522" y="492" text-anchor="middle">2,061 m</text>
            <path id="carp" d="M460 371Q515 395 566 444" fill="none"/><text class="carp"><textPath href="#carp" textLength="122">Eastern Carpathians</textPath></text></g>
          <g class="river">
            <text transform="translate(684 419) rotate(32)" textLength="34">Dnister</text><text transform="translate(687 521) rotate(58)" textLength="34">Prut R.</text><text transform="translate(661 557) rotate(64)" textLength="34">Siret R.</text><text transform="translate(825 274) rotate(48)" textLength="38">Dnieper</text><text transform="translate(1031 300) rotate(-75)" textLength="42">Vorskla</text><text transform="translate(1131 325) rotate(31)" textLength="45">Donets R.</text><text transform="translate(859 445) rotate(59)" textLength="62">Southern Bug</text><text transform="translate(911 476) rotate(-82)" textLength="34">Inhul R.</text><text x="1364" y="490">Don R.</text>
          </g>
          <g class="sea"><text x="898" y="605" textLength="63">Karkinit Bay</text><text x="1101" y="590" textLength="71">Sea of Azov</text></g>
          <g class="deg"><text x="396" y="297">50°</text><text x="1421" y="296">50°</text><path d="M386 292h7M1445 293h8" stroke="#2b4a96"/></g>
          <g transform="translate(1385 261)"><path d="M-15-16L0-5 16-16 5 0 16 15 0 6-15 16-5 0z" fill="#8d8873"/><path d="M-15-16L-3-8 0 0zM16-16L3-3 8 0zM16 15L3 3 0 8zM-15 16L-8 0-3 3z" fill="#e6d98b"/><path d="M-31 1L-4-4 0 0 31 1 4 4 0 0z" fill="#f0b52a"/><path d="M0-29L4-4 0 0 31 1 0 0 4 4 0 30z" fill="#fff"/><path d="M0-29L-4-4 0 0z" fill="#c3202b"/><path d="M0 30L-4 4 0 0z" fill="#5a9ddd"/><path d="M31 1L4 5 0 0z" fill="#f1df2d"/></g>
          <!-- legend -->
          <rect x="406" y="512" width="177" height="142" rx="10" fill="#8b7552" opacity=".18"/>
          <rect x="404" y="510" width="177" height="142" rx="10" fill="#8b7552" opacity=".25"/>
          <rect x="402" y="508" width="178" height="142" rx="10" fill="#fff"/>
          <text x="441" y="541" textLength="100" class="nation n24">UKRAINE</text>
          <use href="#cap" x="428" y="553" width="10" height="10"/><use href="#obl" x="428" y="570" width="9" height="9"/><use href="#town" x="429.500" y="589" width="7" height="7"/><use href="#air" x="428" y="604" width="11" height="11"/>
          <path d="M415 628h37" stroke="#222" stroke-dasharray="8 1 2 1"/><path d="M415 642.500h37" stroke="#d64060" stroke-width="1.600"/>
          <g class="lg"><text x="456" y="562.500" textLength="71">National capital</text><text x="456" y="579.500" textLength="62">Oblast center</text><text x="456" y="597" textLength="45">City, town</text><text x="456" y="614.500">Airport</text><text x="456" y="632" textLength="105">International boundary</text><text x="456" y="646.500">Road</text></g>
          </svg>
          <path d="M378.500 232v411" stroke="#2449b8"/><path d="M385.500 232v411" stroke="#282838"/><path d="M1451.500 232v411" stroke="#c7bcc2" stroke-width="1.500"/><path d="M1457.500 232v411" stroke="#8196d5"/>
        </svg>
        <div class="progress"></div>
      </div>
      <div class="stats">
        <div class="stat"><h4>9</h4><p>Days Left</p></div>
        <div class="stat"><h4 class="w2">0.001</h4><p class="p2">Raised of 0.001</p></div>
        <div class="stat"><h4>0</h4><p class="p3">Total Backers</p></div>
      </div>
    </div>

    <div class="info">
      <div class="left">
        <h3 class="h-creator">Creator</h3>
        <div class="who"><div class="ava"><svg width="33" height="21"><use href="#third"/></svg></div><span>0xF1e4fB3bB43d90235627252bdd24dF37D805C739</span></div>
        <h3 class="h-story">Story</h3>
        <p class="story">Need 0.001 ETH for providing health shelter food for 1000 people.</p>
        <h3 class="h-don">Donators</h3>
        <p class="none">No donators yet. Be the first one!</p>
      </div>
      <div class="right">
        <h3 class="h-track">Track</h3>
        <div class="card"><h5>Campaign Tracking</h5><div class="bar2"></div><p class="none">No donators yet. Be the first one!</p></div>
      </div>
    </div>
  </main>
</div>
</body>
</html>
```

FILE: styles.css
```css
* { box-sizing: border-box; }
body { margin: 0; width: 1920px; height: 1080px; overflow: hidden; background: #15141d; font-family: Inter, "Open Sans", sans-serif; color: #fff; }
h3, h4, h5, p { margin: 0; }
button { border: 0; font: inherit; color: #fff; padding: 0; }
svg { display: block; flex: none; }
.defs { position: absolute; }

/* browser frame */
.browser { height: 125px; background: #333545; font-family: "Open Sans", "Noto Sans", sans-serif; font-size: 14px; white-space: nowrap; border-bottom: 1px solid #1b1b25; }
.tabs { height: 38px; background: #0d0b17; display: flex; align-items: center; padding-left: 5px; }
.tab { display: flex; align-items: center; height: 38px; gap: 10px; }
.tab span { padding-bottom: 2px; }
.active { width: 300px; background: #333545; border-radius: 7px 7px 0 0; padding: 0 9px 0 11px; }
.tab-a { font-weight: 600; letter-spacing: 0; }
.tab-x { margin-left: auto; }
.second { width: 299px; padding-left: 9px; color: #a9a9b2; background: linear-gradient(#44444f, #44444f) right center / 1px 24px no-repeat; }
.tab-b { letter-spacing: .17px; }
.plus { margin-left: 19px; }
.win { margin-left: auto; display: grid; grid-template-columns: repeat(4, 57px); justify-items: center; align-items: center; padding-right: 1px; }
.toolbar { height: 44px; display: flex; align-items: center; padding-left: 8px; }
.cell { width: 40px; display: flex; justify-content: center; flex: none; }
.wide { width: 44px; }
.mark { margin-left: 165px; }
.url { margin-left: 8px; width: 1196px; height: 35px; background: #1a1b23; border-radius: 5px; display: flex; align-items: center; padding-left: 13px; }
.addr { margin: 0 auto 0 12px; font-size: 16px; color: #898a92; letter-spacing: .31px; }
.addr b { font-weight: 400; color: #fff; }
.share { margin-right: 12px; }
.bar { width: 1px; height: 20px; background: #696b77; }
.fox { margin-left: 109px; }
.wallet { margin-left: 3px; }
.update { margin-left: 4px; width: 97px; height: 35px; border: 1px solid #7fd39a; border-radius: 5px; background: #364147; color: #7fd39a; display: flex; align-items: center; gap: 12px; padding-left: 9px; font-size: 15px; }
.update span { padding-bottom: 2px; width: 51px; letter-spacing: -.3px; }
.marks { height: 38px; display: grid; grid-template-columns: 187px 192px 192px 39px 187px 186px 185px 116px 168px 255px 23px 13px 150px; align-items: center; padding-left: 18px; }
.bm { display: flex; align-items: center; gap: 9px; }
.bm svg { width: 20px; }
.bm b { font-weight: 400; letter-spacing: .12px; padding-bottom: 2px; }
.more { font-size: 18px; padding-bottom: 3px; }
.tuf { font: italic bold 7px "Open Sans", sans-serif; fill: #fff; }

/* application */
.app { display: flex; padding: 15px 0 0 16px; }
.rail { width: 76px; padding-top: 4px; }
.logo { width: 52px; height: 52px; margin: 0 12px 49px; border-radius: 10px; background: #2c2f32; display: grid; place-items: center; }
.nav { height: 789px; background: #1c1c24; border-radius: 20px; padding: 15px 14px 16px; display: flex; flex-direction: column; gap: 12px; }
.item { width: 48px; height: 48px; border-radius: 10px; display: grid; place-items: center; position: relative; }
.on { background: #2c2f32; }
.logo, .on, .ava { background: #2d2e33; }
.hand { position: absolute; left: 18px; top: 18px; }
.sun { margin-top: auto; box-shadow: 0 3px 14px rgba(20, 20, 28, .7); }
.main { margin-left: 286px; width: 1260px; }
.top { display: flex; height: 52px; }
.search { width: 458px; height: 52px; border-radius: 26px; background: #1c1c24; padding: 8px 8px 8px 16px; display: flex; justify-content: space-between; align-items: center; font-size: 14px; color: #4b5264; letter-spacing: .25px; }
.search span { margin-top: -1px; }
.go { width: 62px; height: 36px; border-radius: 18px; background: #4acd8d; display: grid; place-items: center; }
.create { margin-left: auto; width: 185px; height: 52px; border-radius: 10px; background: #1dc071; font-weight: 600; font-size: 16px; letter-spacing: .4px; padding-bottom: 3px; }
.ava { width: 52px; height: 52px; border-radius: 50%; display: grid; place-items: center; }
.top .ava { margin-left: 16px; }
.hero { display: flex; gap: 30px; margin-top: 40px; }
.visual { width: 1080px; }
.map { border-radius: 11px; }
.progress { height: 20px; margin-top: 8px; background: #4acd8d; }
.stats { width: 150px; display: flex; flex-direction: column; gap: 47px; padding-top: 1px; }
.stat { height: 109.300px; text-align: center; }
.stat h4 { height: 69px; background: #1c1c24; border-radius: 10px 10px 0 0; font-size: 30px; line-height: 64px; font-weight: 700; }
.stat h4.w2 { letter-spacing: -1px; }
.stat p { height: 40.300px; background: #28282e; color: #808191; font-size: 16px; line-height: 37px; letter-spacing: .2px; }
.stat p.p2 { letter-spacing: 0; }
.info { display: flex; justify-content: space-between; margin-top: 59px; }
h3 { font-size: 18px; font-weight: 600; line-height: 28px; text-transform: uppercase; letter-spacing: -1.150px; }
.left p, .card p { font-size: 16px; line-height: 24px; color: #808191; }
.who { display: flex; align-items: center; gap: 14px; margin: 21px 0 37px; height: 53px; }
.who .ava { width: 51px; height: 53px; }
.who span { font-size: 14px; font-weight: 600; letter-spacing: -.38px; margin-top: -5px; }
.story { margin: 20px 0 41px; letter-spacing: .1px; }
.left .none { margin-top: 20px; }
.left .none, .card .none { letter-spacing: .43px; }
.left .none { letter-spacing: .33px; }
.card .none { letter-spacing: .31px; }
.card { width: 294px; height: 188px; margin-top: 21px; background: #1c1c24; border-radius: 10px; padding: 15px 16px; text-align: center; white-space: nowrap; }
.card h5 { font-weight: 400; font-size: 20px; line-height: 28px; color: #808191; letter-spacing: 0; }
.bar2 { height: 20px; background: #4acd8d; margin: 33px 0 49px; }

/* map lettering */
.ct, .sm, .lg { font-family: "Liberation Sans", Arial, sans-serif; fill: #161616; }
.ct { font-size: 12px; }
.big { font-size: 13px; }
.sm { font-size: 9.500px; }
.md { font-size: 11px; }
.lg { font-size: 10.500px; }
.kyiv { font-weight: bold; font-size: 14px; }
.chis { font-weight: bold; font-size: 14px; }
.nation { font-family: Lato, "Open Sans", sans-serif; fill: #1c1a18; font-weight: 400; }
.n9 { font-size: 9px; }
.n12 { font-size: 12px; }
.n13 { font-size: 13px; }
.n20 { font-size: 21px; }
.n22 { font-size: 22px; }
.n24 { font-size: 23px; }
.peak { font: italic bold 12px "Liberation Serif", serif; fill: #1a1a1a; }
.carp { font-size: 12px; }
.river { font: italic bold 11.500px "Liberation Serif", serif; fill: #1d3f92; }
.sea { font: italic 12px "Liberation Serif", serif; fill: #1c4f9c; }
.deg { font: 12.500px "Liberation Sans", sans-serif; fill: #2b4a96; }
```
